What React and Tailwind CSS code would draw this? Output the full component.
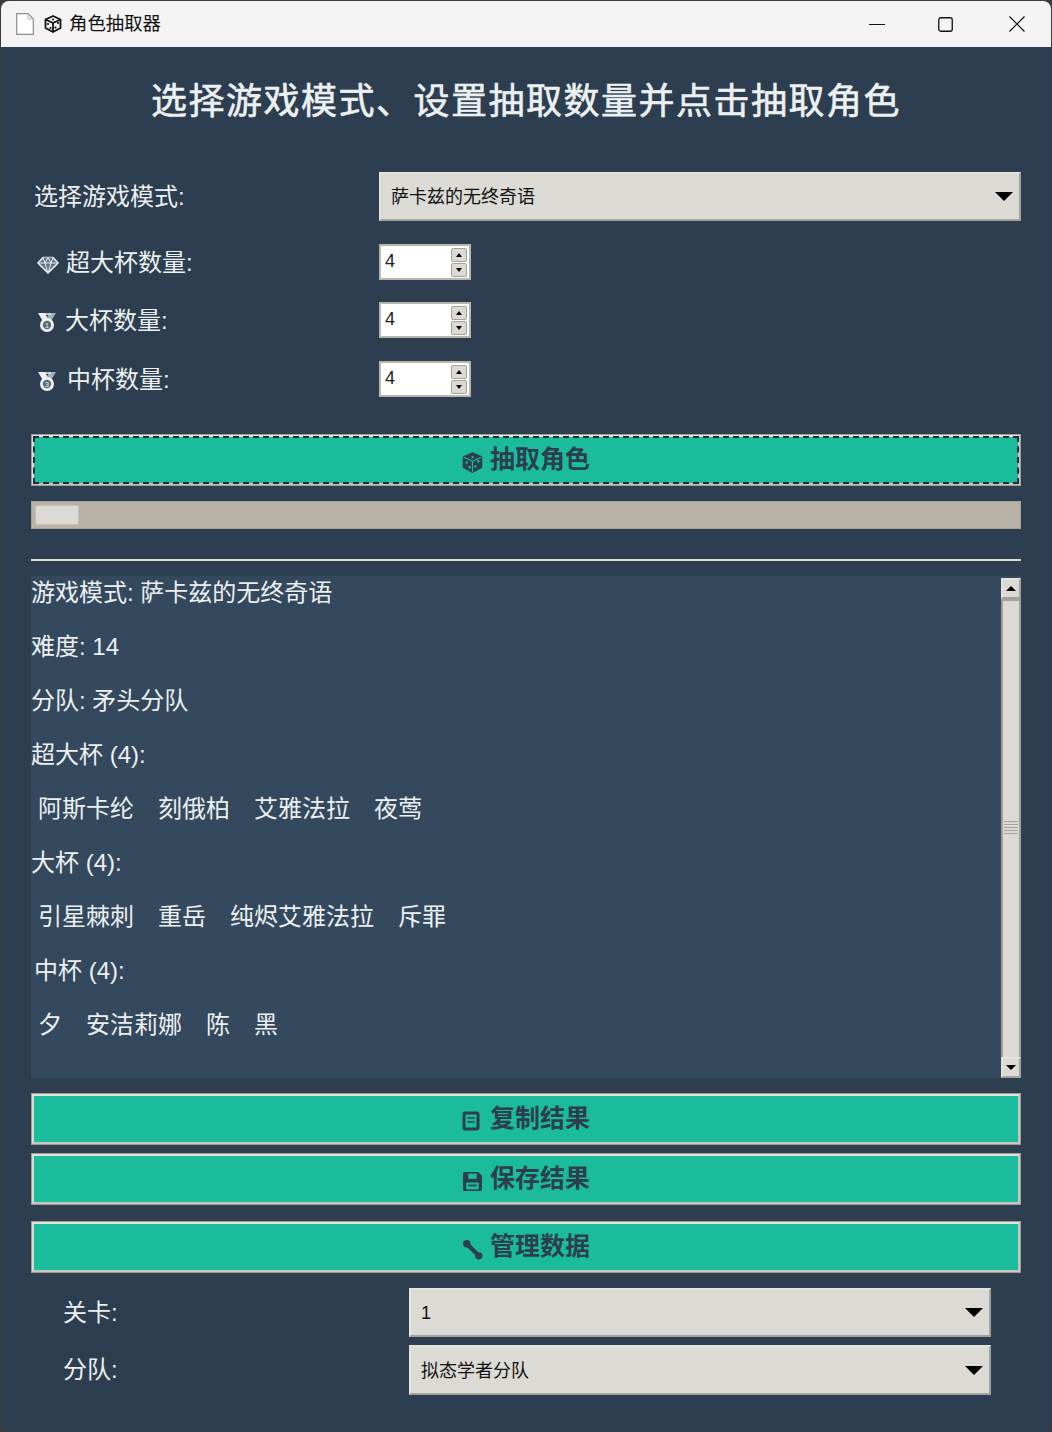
const raised = 'border-2 border-t-[#e4e2dd] border-l-[#e4e2dd] border-r-[#a3a199] border-b-[#a3a199]';

const names = [
  ['阿斯卡纶', '刻俄柏', '艾雅法拉', '夜莺'],
  ['引星棘刺', '重岳', '纯烬艾雅法拉', '斥罪'],
  ['夕', '安洁莉娜', '陈', '黑'],
];

function Dice({ className, stroke = '#111', fill = 'none', dot }) {
  const dotColor = dot || stroke;
  return (
    <svg viewBox="0 0 18 18" className={className} fill={fill} stroke={stroke} strokeWidth="1.8" strokeLinejoin="round">
      <path d="M9 1 16.500 4.500V13L9 17 1.500 13V4.500Z" />
      <path d="M1.500 4.500 9 8 16.500 4.500M9 8V17" stroke={dot || stroke} strokeWidth={dot ? 1 : 1.8} />
      <circle cx="9" cy="4.500" r="1" fill={dotColor} stroke="none" />
      <circle cx="4" cy="9" r="1.100" fill={dotColor} stroke="none" />
      <circle cx="6.500" cy="13" r="1.100" fill={dotColor} stroke="none" />
      <circle cx="14" cy="8" r="1.100" fill={dotColor} stroke="none" />
      <circle cx="11.500" cy="12.500" r="1.100" fill={dotColor} stroke="none" />
    </svg>
  );
}

function Diamond() {
  return (
    <svg viewBox="0 0 22 18" className="h-[18px] w-[22px]" fill="#5f7488" stroke="#e6ecef" strokeWidth="1.700" strokeLinejoin="round">
      <path d="M6 1.500H16L21 7 11 17 1 7Z" />
      <path d="M1 7H21M8 7 11 17 14 7M6 1.500 8 7 11 1.500 14 7 16 1.500" strokeWidth="1" />
    </svg>
  );
}

function Medal({ digit }) {
  return (
    <svg viewBox="0 0 18 20" className="h-[20px] w-[18px]">
      <path d="M0 1h7l3 6-4 4Z" fill="#eef2f3" />
      <path d="M18 1h-6.500L8 7l4 4Z" fill="#9fb0ba" />
      <path d="M5 2h8" stroke="#eef2f3" strokeWidth="1.500" />
      <circle cx="9" cy="13" r="7" fill="#eef1f2" />
      <circle cx="9" cy="13" r="4.200" fill="#5b6b78" />
      <text x="9" y="15.500" fontSize="7" textAnchor="middle" fill="#f4f4f4" fontFamily="Liberation Sans">{digit}</text>
    </svg>
  );
}

function ComboBox({ value, label, className = '' }) {
  return (
    <div className={`flex h-full items-center justify-between bg-[#dcdad5] pl-[10px] pr-[6px] text-[18px] text-[#111] ${raised} ${className}`}>
      <span className="mt-[2px]">{value}</span>
      <svg viewBox="0 0 18 9" className="h-[9px] w-[18px]" aria-label={label}>
        <path d="M0 0h18L9 9Z" fill="#000" />
      </svg>
    </div>
  );
}

function SpinBox() {
  return (
    <div className="flex h-[36px] w-[92px] items-center justify-between border-2 border-[#b9b6ae] bg-white pl-[4px] pr-[2px] text-[18px] text-[#222]">
      <span className="-mt-[1px]">4</span>
      <div className="flex flex-col gap-[1px]">
        {['M0 4 3 0 6 4Z', 'M0 0H6L3 4Z'].map((d) => (
          <div key={d} className="flex h-[14px] w-[16px] items-center justify-center rounded-[2px] border border-[#a3a199] bg-[#dcdad5]">
            <svg viewBox="0 0 6 4" className="h-[4px] w-[6px]">
              <path d={d} fill="#000" />
            </svg>
          </div>
        ))}
      </div>
    </div>
  );
}

function SpinRow({ icon, label, className }) {
  return (
    <div className={`flex h-[36px] items-center ${className}`}>
      <div className="flex w-[348px] items-center text-[24px] text-[#ecf0f1]">
        {icon}
        <span className="mt-[2px]">{label}</span>
      </div>
      <SpinBox />
    </div>
  );
}

function TealButton({ icon, label, className, focused, gap = 'gap-[7px]' }) {
  const content = (
    <span className={`flex items-center justify-center text-[25px] font-bold text-[#2c3e50] ${gap}`}>
      <span className="mt-[5px]">{icon}</span>
      {label}
    </span>
  );
  return (
    <div className={`h-[52px] border border-[#9f9d95] ${className}`}>
      <div className="h-full border-2 border-t-[#e4e2dd] border-l-[#dcdad5] border-r-[#c9c6bf] border-b-[#c9c6bf] bg-[#1abc9c]">
        {focused ? (
          <div className="-m-[1px] flex h-[calc(100%+2px)] items-center justify-center border-2 border-dashed border-[#1f2d3a] pb-[1px]">{content}</div>
        ) : (
          <div className="flex h-full items-center justify-center pb-[1px]">{content}</div>
        )}
      </div>
    </div>
  );
}

function ResultLine({ children, className = '' }) {
  return <div className={`flex h-[54px] items-center ${className}`}>{children}</div>;
}

function NameRow({ items }) {
  return (
    <ResultLine className="gap-[24px] pl-[7px]">
      {items.map((name) => (
        <span key={name}>{name}</span>
      ))}
    </ResultLine>
  );
}

function ScrollArrow({ d }) {
  return (
    <div className="flex h-[21px] w-[20px] items-center justify-center border-2 border-t-[#e4e2dd] border-l-[#e4e2dd] border-r-[#a3a199] border-b-[#a3a199] bg-[#dcdad5]">
      <svg viewBox="0 0 10 5" className="h-[5px] w-[10px]">
        <path d={d} fill="#000" />
      </svg>
    </div>
  );
}

export default function App() {
  return (
    <div className="h-[1432px] w-[1052px] overflow-hidden bg-[#3b3b3b] px-[1px] pt-[1px] font-['Liberation_Sans','Noto_Sans_CJK_SC',sans-serif]">
      {/* Title bar */}
      <div className="flex h-[46px] items-center rounded-t-[8px] bg-[#f3f3f3] pl-[15px]">
        <svg viewBox="0 0 18 22" className="h-[22px] w-[18px]">
          <path d="M.7.7H12L17.300 6V21.300H.7Z" fill="#fff" stroke="#8c8c8c" strokeWidth="1.200" />
          <path d="M12 .7V6h5.300" fill="none" stroke="#b5b5b5" />
        </svg>
        <Dice className="ml-[10px] h-[18px] w-[18px]" />
        <span className="ml-[7px] text-[18.400px] text-[#111]">角色抽取器</span>
        <div className="ml-auto flex items-center pr-[26px]">
          <svg viewBox="0 0 16 1" className="h-[1px] w-[16px]"><path d="M0 .5H16" stroke="#111" /></svg>
          <svg viewBox="0 0 15 15" className="ml-[53px] h-[15px] w-[15px]"><rect x=".75" y=".75" width="13.500" height="13.500" rx="2" fill="none" stroke="#111" strokeWidth="1.300" /></svg>
          <svg viewBox="0 0 16 16" className="ml-[56px] h-[16px] w-[16px]"><path d="M.5.5 15.500 15.500M15.500.5.5 15.500" stroke="#111" strokeWidth="1.200" /></svg>
        </div>
      </div>

      {/* Body */}
      <div className="h-[1385px] rounded-b-[8px] bg-[#2c3e50] px-[30px]">
        <div className="h-[125px] pt-[31px] text-center text-[36px] font-normal leading-[48px] tracking-[1.500px] text-[#ecf0f1] [-webkit-text-stroke:0.6px_#ecf0f1]">
          选择游戏模式、设置抽取数量并点击抽取角色
        </div>

        <div className="flex h-[49px] items-center">
          <div className="w-[348px] pl-[3px] text-[24px] text-[#ecf0f1]">选择游戏模式:</div>
          <div className="h-full flex-1"><ComboBox value="萨卡兹的无终奇语" label="展开" /></div>
        </div>

        <SpinRow
          className="mt-[23px]"
          icon={<span className="ml-[6px] mr-[7px] mt-[6px]"><Diamond /></span>}
          label="超大杯数量:"
        />
        <SpinRow
          className="mt-[22px]"
          icon={<span className="ml-[7px] mr-[9px] mt-[4px]"><Medal digit="1" /></span>}
          label="大杯数量:"
        />
        <SpinRow
          className="mt-[23px]"
          icon={<span className="ml-[7px] mr-[11px] mt-[4px]"><Medal digit="3" /></span>}
          label="中杯数量:"
        />

        <TealButton
          className="mt-[37px]"
          focused
          icon={<Dice className="h-[21px] w-[21px]" stroke="#2c3e50" fill="#2c3e50" dot="#1abc9c" />}
          label="抽取角色"
        />

        {/* Progress bar */}
        <div className="mt-[15px] h-[28px] border border-[#a3a199] bg-[#b8b2a7] p-[3px]">
          <div className="h-full w-[44px] rounded-[2px] border border-[#c4c1ba] bg-[#dcdad5]" />
        </div>

        <div className="mt-[30px] h-[2px] bg-[#dcdad5]" />

        {/* Result text */}
        <div className="mt-[15px] flex h-[502px] bg-[#34495e] text-[24px] text-[#ecf0f1]">
          <div className="flex-1 -mt-[10px]">
            <ResultLine>游戏模式: 萨卡兹的无终奇语</ResultLine>
            <ResultLine>难度: 14</ResultLine>
            <ResultLine>分队: 矛头分队</ResultLine>
            <ResultLine>超大杯 (4):</ResultLine>
            <NameRow items={names[0]} />
            <ResultLine>大杯 (4):</ResultLine>
            <NameRow items={names[1]} />
            <ResultLine className="pl-[3px]">中杯 (4):</ResultLine>
            <NameRow items={names[2]} />
          </div>
          <div className="flex w-[20px] flex-col pt-[2px]">
            <ScrollArrow d="M0 5 5 0 10 5Z" />
            <div className="flex flex-1 items-center justify-center border-x-2 border-t-2 border-[#a3a199] bg-[#dcdad5] pb-[4px]">
              <div className="flex flex-col gap-[2px]">
                {[0, 1, 2, 3, 4].map((i) => (
                  <div key={i} className="h-[1px] w-[14px] bg-[#a3a199]" />
                ))}
              </div>
            </div>
            <ScrollArrow d="M0 0H10L5 5Z" />
          </div>
        </div>

        <TealButton
          className="mt-[15px]"
          gap="gap-[10px]"
          icon={
            <svg viewBox="0 0 18 20" className="h-[20px] w-[18px]" fill="none" stroke="#2c3e50" strokeWidth="3">
              <rect x="2" y="2" width="14" height="16" rx="1.500" />
              <path d="M5.500 7h7M5.500 11h7" strokeWidth="1.600" />
            </svg>
          }
          label="复制结果"
        />
        <TealButton
          className="mt-[8px]"
          icon={
            <svg viewBox="0 0 20 20" className="h-[21px] w-[21px]">
              <path d="M2.500 1H15.500L19 4.500V17.500A1.500 1.500 0 0 1 17.500 19H2.500A1.500 1.500 0 0 1 1 17.500V2.500A1.500 1.500 0 0 1 2.500 1Z" fill="#2c3e50" />
              <rect x="6" y="2.500" width="8" height="5" fill="#1abc9c" />
              <rect x="4" y="11" width="12" height="6.500" fill="#1abc9c" />
              <rect x="6" y="13" width="8" height="1.500" fill="#2c3e50" />
            </svg>
          }
          label="保存结果"
        />
        <TealButton
          className="mt-[16px]"
          icon={
            <svg viewBox="0 0 20 20" className="h-[21px] w-[21px]" fill="#2c3e50">
              <path d="M5 5 16 16" stroke="#2c3e50" strokeWidth="4" />
              <circle cx="4.500" cy="4.500" r="3.500" />
              <circle cx="16" cy="16" r="3.500" />
            </svg>
          }
          label="管理数据"
        />

        <div className="mt-[15px] flex h-[49px] items-center pl-[32px] pr-[30px]">
          <div className="w-[346px] text-[24px] text-[#ecf0f1]">关卡:</div>
          <div className="h-full flex-1"><ComboBox value="1" label="展开" /></div>
        </div>
        <div className="mt-[8px] flex h-[50px] items-center pl-[32px] pr-[30px]">
          <div className="w-[346px] text-[24px] text-[#ecf0f1]">分队:</div>
          <div className="h-full flex-1"><ComboBox value="拟态学者分队" label="展开" /></div>
        </div>
      </div>
    </div>
  );
}
